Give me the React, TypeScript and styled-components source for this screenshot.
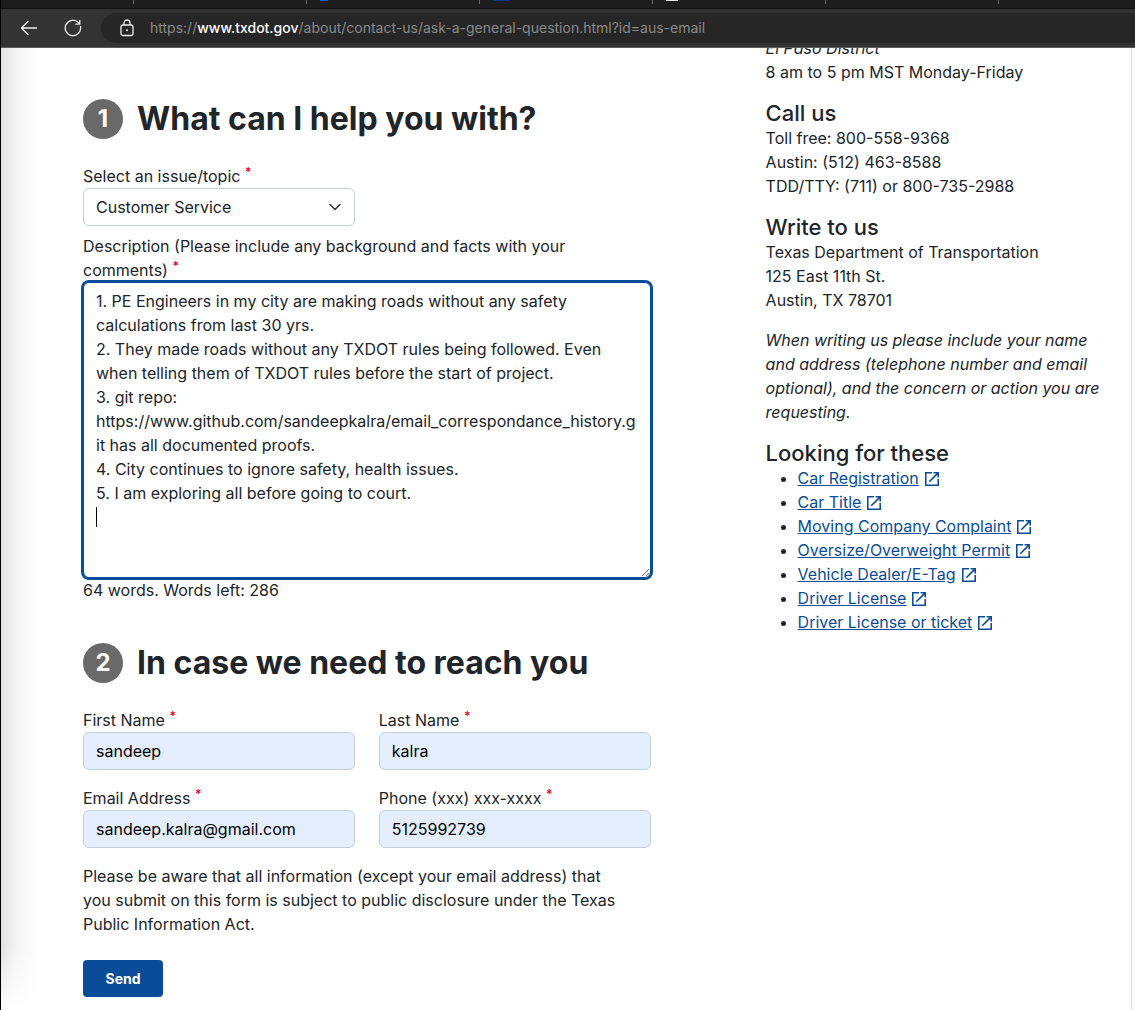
import React from "react";
import styled, { createGlobalStyle } from "styled-components";

const INK = "#212529";
const BLUE = "#0b4c98";

const GlobalStyle = createGlobalStyle`
  *, *::before, *::after { box-sizing: border-box; }
  body {
    margin: 0;
    background: #fff;
    color: ${INK};
    font-family: Inter, "Liberation Sans", sans-serif;
    font-size: 16px;
    line-height: 24px;
  }
  button, input, select, textarea { font: inherit; }
`;

const Window = styled.div`
  height: 100vh;
  display: flex;
  flex-direction: column;
  overflow: hidden;
  border-left: 1px solid #000;
`;

const TabStrip = styled.div`
  flex: none;
  display: flex;
  height: 9px;
  padding-left: 132px;
  background: #1d1d1d;
  border-bottom: 1px solid #111;
`;

const Tab = styled.div`
  flex: none;
  width: 173px;
  height: 4px;
  padding-left: 13px;
  border-left: 1px solid #6a6a6a;
`;

const Favicon = styled.span<{ $color: string; $width: number }>`
  display: block;
  width: ${(p) => p.$width}px;
  height: 1px;
  background: ${(p) => p.$color};
`;

const Toolbar = styled.div`
  flex: none;
  display: flex;
  align-items: center;
  height: 39px;
  padding-left: 16px;
  background: #333;
  border-bottom: 1px solid #5a5a5a;
`;

const ToolButton = styled.button`
  display: flex;
  width: 24px;
  height: 24px;
  margin-right: 20px;
  padding: 0;
  align-items: center;
  justify-content: center;
  border: 0;
  background: none;
  color: #eee;
`;

const AddressBar = styled.div`
  flex: 1;
  display: flex;
  align-items: center;
  gap: 15px;
  height: 30px;
  margin-left: -4px;
  padding-left: 18px;
  border-radius: 15px 0 0 15px;
  background: #262626;
  color: #8a8a8a;
  font-size: 14px;
  white-space: nowrap;
`;

const Host = styled.span`
  color: #fff;
  font-weight: 500;
`;

const Viewport = styled.div`
  flex: 1;
  min-height: 0;
  display: flex;
  overflow: hidden;
`;

const Page = styled.main`
  flex: 1;
  display: grid;
  grid-template-columns: minmax(0, 22fr) minmax(0, 13fr);
  column-gap: 115px;
  align-items: start;
  padding: 0 30px 0 82px;
  background:
    linear-gradient(to top, #fff, rgba(255, 255, 255, 0) 64px),
    linear-gradient(to right, #e2e0e0, #f3f3f3 14px, #fcfcfc 30px, #fff 44px);
`;

const ScrollTrack = styled.div`
  flex: none;
  width: 4px;
  background: #fafafa;
  border-left: 1px solid #e3e3e3;
`;

const Form = styled.form`
  display: flex;
  flex-direction: column;
  align-items: stretch;
  padding-top: 50px;
`;

const StepHeading = styled.h2`
  display: flex;
  align-items: center;
  gap: 14px;
  margin: 0 0 24px;
  font-size: 32px;
  line-height: 42px;
  font-weight: 700;
`;

const StepNumber = styled.span`
  display: flex;
  align-items: center;
  justify-content: center;
  width: 40px;
  height: 40px;
  border-radius: 50%;
  background: #696969;
  color: #fff;
  font-size: 24px;
  line-height: 40px;
`;

const FieldGrid = styled.div`
  display: grid;
  grid-template-columns: repeat(2, minmax(0, 1fr));
  gap: 16px 24px;
`;

const Field = styled.div`
  display: flex;
  flex-direction: column;
`;

const Label = styled.label`
  display: block;
`;

const Star = styled.span`
  color: #e4002b;
  font-size: 12px;
  font-weight: 600;
  line-height: 0;
  vertical-align: super;
`;

const controlBase = `
  display: block;
  width: 100%;
  border: 1px solid #c5cdd5;
  border-radius: 6px;
  padding: 6px 12px;
  outline: none;
`;

const Input = styled.input`
  ${controlBase}
  height: 38px;
  background: #e5eefe;
  color: #000;
`;

const SelectBox = styled.div`
  display: grid;
  align-items: center;
  margin-bottom: 8px;

  & > * { grid-area: 1 / 1; }
  & > svg { justify-self: end; margin-right: 12px; pointer-events: none; }
`;

const Select = styled.select`
  ${controlBase}
  height: 38px;
  appearance: none;
  background: #fff;
  color: ${INK};
`;

const TextBox = styled.div`
  position: relative;
`;

const TextArea = styled.textarea`
  ${controlBase}
  height: 296px;
  resize: vertical;
  color: ${INK};
  background: #fff;
  border-color: ${BLUE};
  box-shadow: 0 0 0 2px ${BLUE};
  overflow: hidden;
  caret-color: transparent;
`;

const Caret = styled.span`
  position: absolute;
  left: 13px;
  top: 225px;
  width: 1px;
  height: 20px;
  background: #000;
`;

const WordCount = styled.div`
  margin-bottom: 40px;
`;

const Notice = styled.p`
  max-width: 544px;
  margin: 16px 0 24px;
`;

const SendButton = styled.button`
  align-self: flex-start;
  width: 80px;
  height: 37px;
  padding: 0;
  border: 0;
  border-radius: 4px;
  background: ${BLUE};
  color: #fff;
  font-size: 14px;
  font-weight: 700;
`;

const Aside = styled.aside`
  margin-top: -12px;
`;

const Block = styled.p`
  margin: 0 0 16px;
`;

const SideHeading = styled.h3`
  margin: 0;
  font-size: 22px;
  line-height: 26px;
  font-weight: 500;
`;

const LinkList = styled.ul`
  margin: 0;
  padding-left: 32px;
`;

const SideLink = styled.a`
  color: ${BLUE};
  text-decoration: underline;

  & > svg { margin-left: 6px; vertical-align: -2px; }
`;

const BackIcon = () => (
  <svg width="18" height="16" viewBox="0 0 18 16" fill="none" stroke="currentColor" strokeWidth="1.3" strokeLinecap="round" strokeLinejoin="round">
    <path d="M16.5 8H1.5M8 1.5 1.5 8 8 14.500" />
  </svg>
);

const ReloadIcon = () => (
  <svg width="18" height="18" viewBox="0 0 18 18" fill="none" stroke="currentColor" strokeWidth="1.3" strokeLinecap="round" strokeLinejoin="round">
    <path d="M16.500 7.500A7.700 7.700 0 1 1 14.500 3.600L15.800 5M15.800 1.300V5.200H11.800" />
  </svg>
);

const LockIcon = () => (
  <svg width="16" height="18" viewBox="0 0 16 18" fill="none" stroke="#eee" strokeWidth="1.3">
    <rect x="2" y="6" width="12" height="10.500" rx="2" />
    <path d="M5 6V4a3 3 0 0 1 6 0v2" />
    <circle cx="8" cy="11.300" r="1" fill="#eee" stroke="none" />
  </svg>
);

const ChevronIcon = () => (
  <svg width="16" height="16" viewBox="0 0 16 16" fill="none" stroke="#343a40" strokeWidth="1.6" strokeLinecap="round" strokeLinejoin="round">
    <path d="m3 5.500 5 5 5-5" />
  </svg>
);

const ExternalIcon = () => (
  <svg width="14" height="14" viewBox="3 3 18 18" fill="currentColor">
    <path d="M19 19H5V5h7V3H3v18h18v-9h-2v7zM14 3v2h3.590l-9.830 9.830 1.410 1.410L19 6.410V10h2V3h-7z" />
  </svg>
);

const Required = () => <Star aria-hidden="true">*</Star>;

const tabs = [
  {},
  { color: "#0f62b8", width: 8 },
  { color: "#123285", width: 16 },
  { color: "#e8e8e8", width: 12 },
  {},
  {},
];

const description = [
  "1. PE Engineers in my city are making roads without any safety calculations from last 30 yrs.",
  "2. They made roads without any TXDOT rules being followed. Even when telling them of TXDOT rules before the start of project.",
  "3. git repo: https://www.github.com/sandeepkalra/email_correspondance_history.git has all documented proofs.",
  "4. City continues to ignore safety, health issues.",
  "5. I am exploring all before going to court.",
  "",
].join("\n");

const contactFields = [
  { id: "first", label: "First Name", value: "sandeep", type: "text" },
  { id: "last", label: "Last Name", value: "kalra", type: "text" },
  { id: "email", label: "Email Address", value: "sandeep.kalra@gmail.com", type: "email" },
  { id: "phone", label: "Phone (xxx) xxx-xxxx", value: "5125992739", type: "tel" },
];

const links = [
  "Car Registration",
  "Car Title",
  "Moving Company Complaint",
  "Oversize/Overweight Permit",
  "Vehicle Dealer/E-Tag",
  "Driver License",
  "Driver License or ticket",
];

export default function App() {
  return (
    <Window>
      <GlobalStyle />
      <TabStrip>
        {tabs.map((tab, i) => (
          <Tab key={i}>{tab.color && <Favicon $color={tab.color} $width={tab.width} />}</Tab>
        ))}
      </TabStrip>
      <Toolbar>
        <ToolButton aria-label="Back"><BackIcon /></ToolButton>
        <ToolButton aria-label="Reload"><ReloadIcon /></ToolButton>
        <AddressBar>
          <LockIcon />
          <span>
            https://<Host>www.txdot.gov</Host>/about/contact-us/ask-a-general-question.html?id=aus-email
          </span>
        </AddressBar>
      </Toolbar>
      <Viewport>
        <Page>
          <Form onSubmit={(e) => e.preventDefault()}>
            <StepHeading><StepNumber>1</StepNumber>What can I help you with?</StepHeading>
            <FieldGrid>
              <Field>
                <Label htmlFor="topic">Select an issue/topic <Required /></Label>
                <SelectBox>
                  <Select id="topic" defaultValue="Customer Service">
                    <option>Customer Service</option>
                  </Select>
                  <ChevronIcon />
                </SelectBox>
              </Field>
            </FieldGrid>
            <Label htmlFor="description">
              Description (Please include any background and facts with your comments) <Required />
            </Label>
            <TextBox>
              <TextArea id="description" spellCheck={false} defaultValue={description} />
              <Caret />
            </TextBox>
            <WordCount>64 words. Words left: 286</WordCount>

            <StepHeading><StepNumber>2</StepNumber>In case we need to reach you</StepHeading>
            <FieldGrid>
              {contactFields.map((f) => (
                <Field key={f.id}>
                  <Label htmlFor={f.id}>{f.label} <Required /></Label>
                  <Input id={f.id} type={f.type} defaultValue={f.value} />
                </Field>
              ))}
            </FieldGrid>
            <Notice>
              Please be aware that all information (except your email address) that you submit on this form is
              subject to public disclosure under the Texas Public Information Act.
            </Notice>
            <SendButton type="submit">Send</SendButton>
          </Form>

          <Aside>
            <Block>
              <em>El Paso District</em><br />
              8 am to 5 pm MST Monday-Friday
            </Block>
            <SideHeading>Call us</SideHeading>
            <Block>
              Toll free: 800-558-9368<br />
              Austin: (512) 463-8588<br />
              TDD/TTY: (711) or 800-735-2988
            </Block>
            <SideHeading>Write to us</SideHeading>
            <Block>
              Texas Department of Transportation<br />
              125 East 11th St.<br />
              Austin, TX 78701
            </Block>
            <Block>
              <em>
                When writing us please include your name and address (telephone number and email optional), and
                the concern or action you are requesting.
              </em>
            </Block>
            <SideHeading>Looking for these</SideHeading>
            <LinkList>
              {links.map((text) => (
                <li key={text}><SideLink href="#">{text}<ExternalIcon /></SideLink></li>
              ))}
            </LinkList>
          </Aside>
        </Page>
        <ScrollTrack />
      </Viewport>
    </Window>
  );
}
